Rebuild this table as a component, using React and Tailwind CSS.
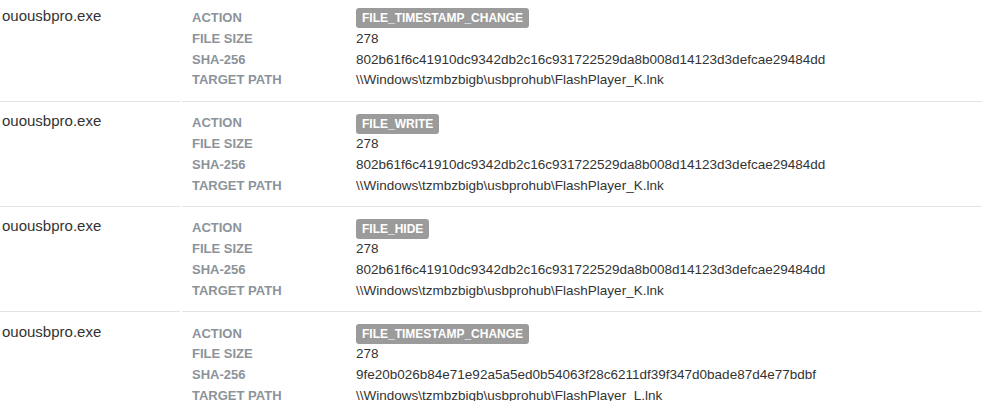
const rows = [
  {
    name: "ouousbpro.exe",
    action: "FILE_TIMESTAMP_CHANGE",
    size: "278",
    sha: "802b61f6c41910dc9342db2c16c931722529da8b008d14123d3defcae29484dd",
    path: "\\\\Windows\\tzmbzbigb\\usbprohub\\FlashPlayer_K.lnk",
  },
  {
    name: "ouousbpro.exe",
    action: "FILE_WRITE",
    size: "278",
    sha: "802b61f6c41910dc9342db2c16c931722529da8b008d14123d3defcae29484dd",
    path: "\\\\Windows\\tzmbzbigb\\usbprohub\\FlashPlayer_K.lnk",
  },
  {
    name: "ouousbpro.exe",
    action: "FILE_HIDE",
    size: "278",
    sha: "802b61f6c41910dc9342db2c16c931722529da8b008d14123d3defcae29484dd",
    path: "\\\\Windows\\tzmbzbigb\\usbprohub\\FlashPlayer_K.lnk",
  },
  {
    name: "ouousbpro.exe",
    action: "FILE_TIMESTAMP_CHANGE",
    size: "278",
    sha: "9fe20b026b84e71e92a5a5ed0b54063f28c6211df39f347d0bade87d4e77bdbf",
    path: "\\\\Windows\\tzmbzbigb\\usbprohub\\FlashPlayer_L.lnk",
  },
];

function Label({ children }) {
  return <div className="text-[13px] font-bold text-[#8c939a]">{children}</div>;
}

function Value({ children }) {
  return <div className="text-[13.5px] text-[#333]">{children}</div>;
}

function Row({ row }) {
  return (
    <div className="flex gap-[2px]">
      <div className="w-[180px] shrink-0 border-b border-[#dfe4e8] pt-[9.5px] pb-[11.5px] pl-[2px] text-[15px] leading-[20px] text-[#333]">
        {row.name}
      </div>
      <div className="flex-1 border-b border-[#dfe4e8] pt-[11.5px] pb-[9.5px] pl-[10px]">
        <div className="grid grid-cols-[164px_1fr] leading-[20.8px]">
          <Label>ACTION</Label>
          <div className="flex items-center">
            <span className="rounded-[3px] bg-[#9b9b9b] px-[6px] text-[12px] font-bold leading-[20px] text-white">
              {row.action}
            </span>
          </div>
          <Label>FILE SIZE</Label>
          <Value>{row.size}</Value>
          <Label>SHA-256</Label>
          <Value>{row.sha}</Value>
          <Label>TARGET PATH</Label>
          <Value>{row.path}</Value>
        </div>
      </div>
    </div>
  );
}

export default function App() {
  return (
    <div className="h-[420px] w-[984px] bg-white font-['Liberation_Sans',Arial,sans-serif]">
      <div className="h-[401px] overflow-hidden">
        <div className="-mt-[3.5px] pr-[2px]">
          {rows.map((r, i) => (
            <Row key={i} row={r} />
          ))}
        </div>
      </div>
    </div>
  );
}
